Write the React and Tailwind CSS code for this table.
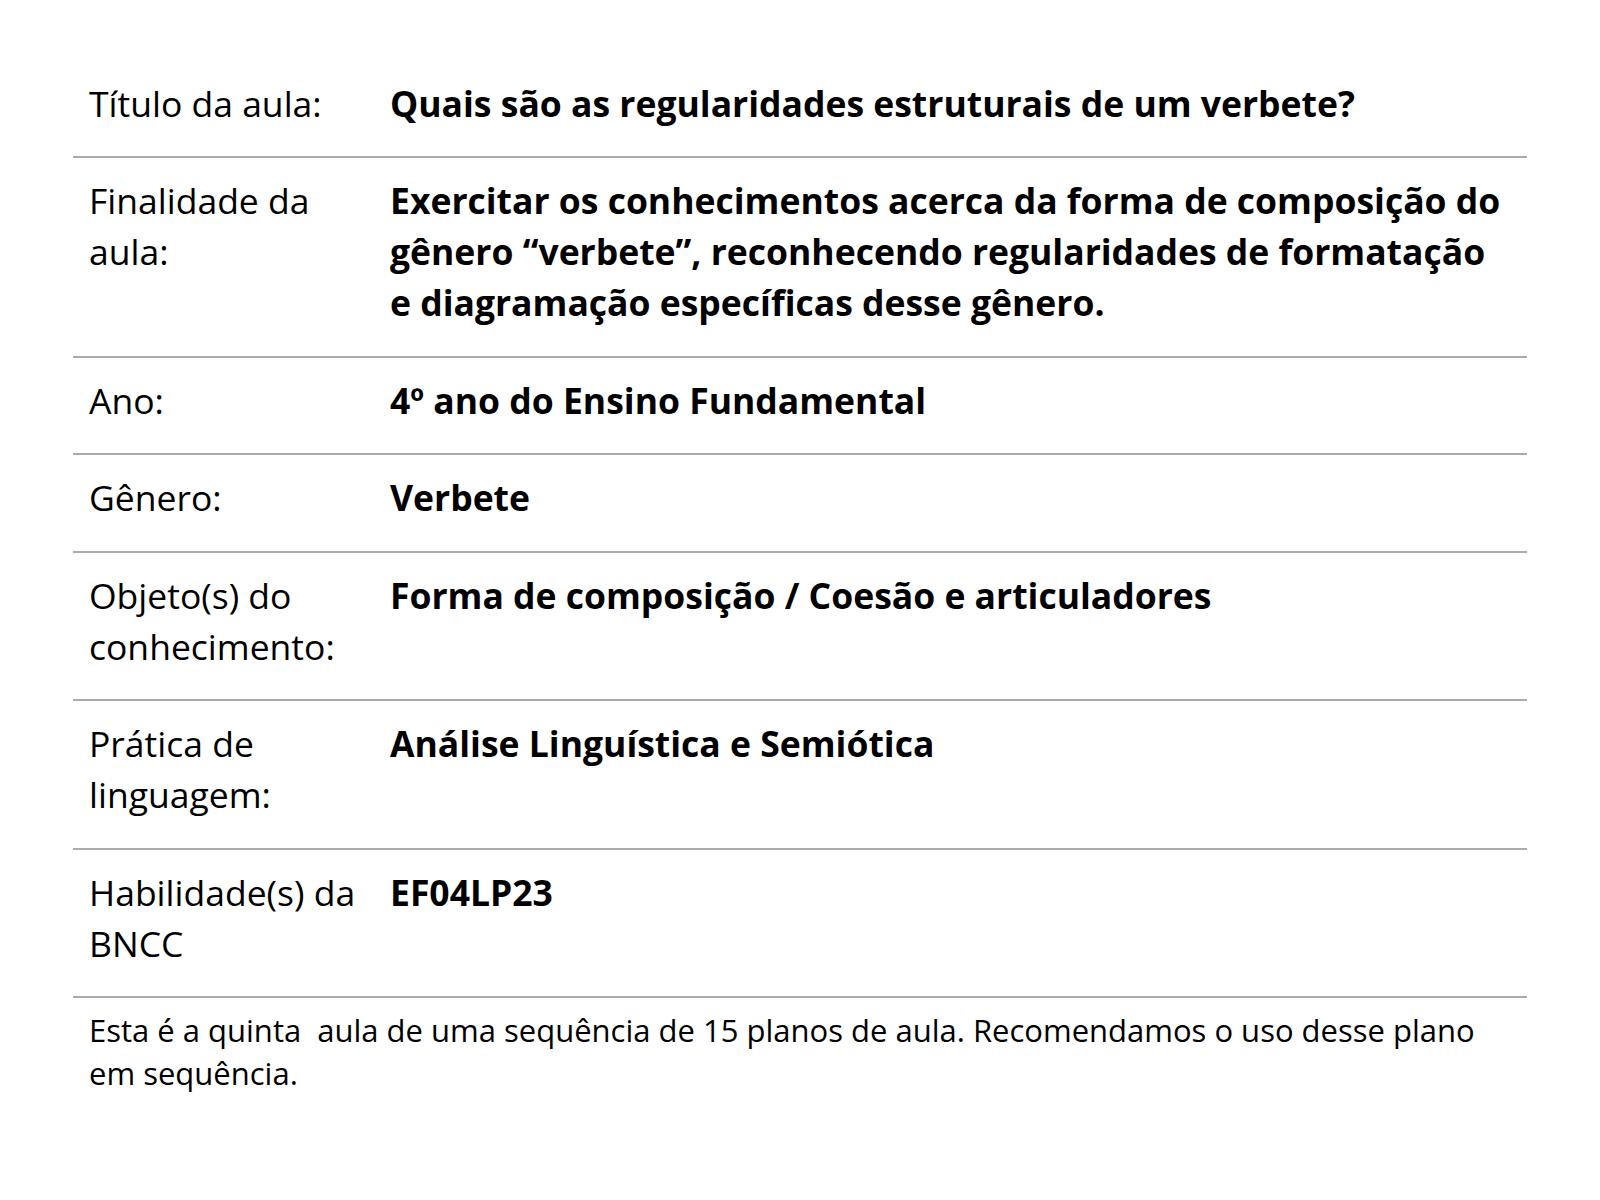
export default function App() {
  const rows = [
    ["Título da aula:", "Quais são as regularidades estruturais de um verbete?"],
    ["Finalidade da aula:", "Exercitar os conhecimentos acerca da forma de composição do gênero “verbete”, reconhecendo regularidades de formatação e diagramação específicas desse gênero."],
    ["Ano:", "4º ano do Ensino Fundamental"],
    ["Gênero:", "Verbete"],
    ["Objeto(s) do conhecimento:", "Forma de composição / Coesão e articuladores"],
    ["Prática de linguagem:", "Análise Linguística e Semiótica"],
    ["Habilidade(s) da BNCC", "EF04LP23"],
  ];
  return (
    <div className="w-[1600px] h-[1200px] bg-white text-black" style={{ fontFamily: '"Open Sans", sans-serif' }}>
      <div className="pt-[60.5px] pl-[73px] w-[1527px]">
        {rows.map(([l, v], i) => (
          <div key={i} className="flex border-b-2 border-[#ababab] pt-[17px] pb-[27.5px] text-[35.5px] leading-[51px]">
            <div className="w-[317px] shrink-0 pl-[16px] pr-[8px]">{l}</div>
            <div className="flex-1 font-bold pr-[20px]">{v}</div>
          </div>
        ))}
        <div className="pl-[16px] pt-[11px] pr-[40px] text-[31px] leading-[43px]">
          Esta é a quinta&nbsp; aula de uma sequência de 15 planos de aula. Recomendamos o uso desse plano em sequência.
        </div>
      </div>
    </div>
  );
}
